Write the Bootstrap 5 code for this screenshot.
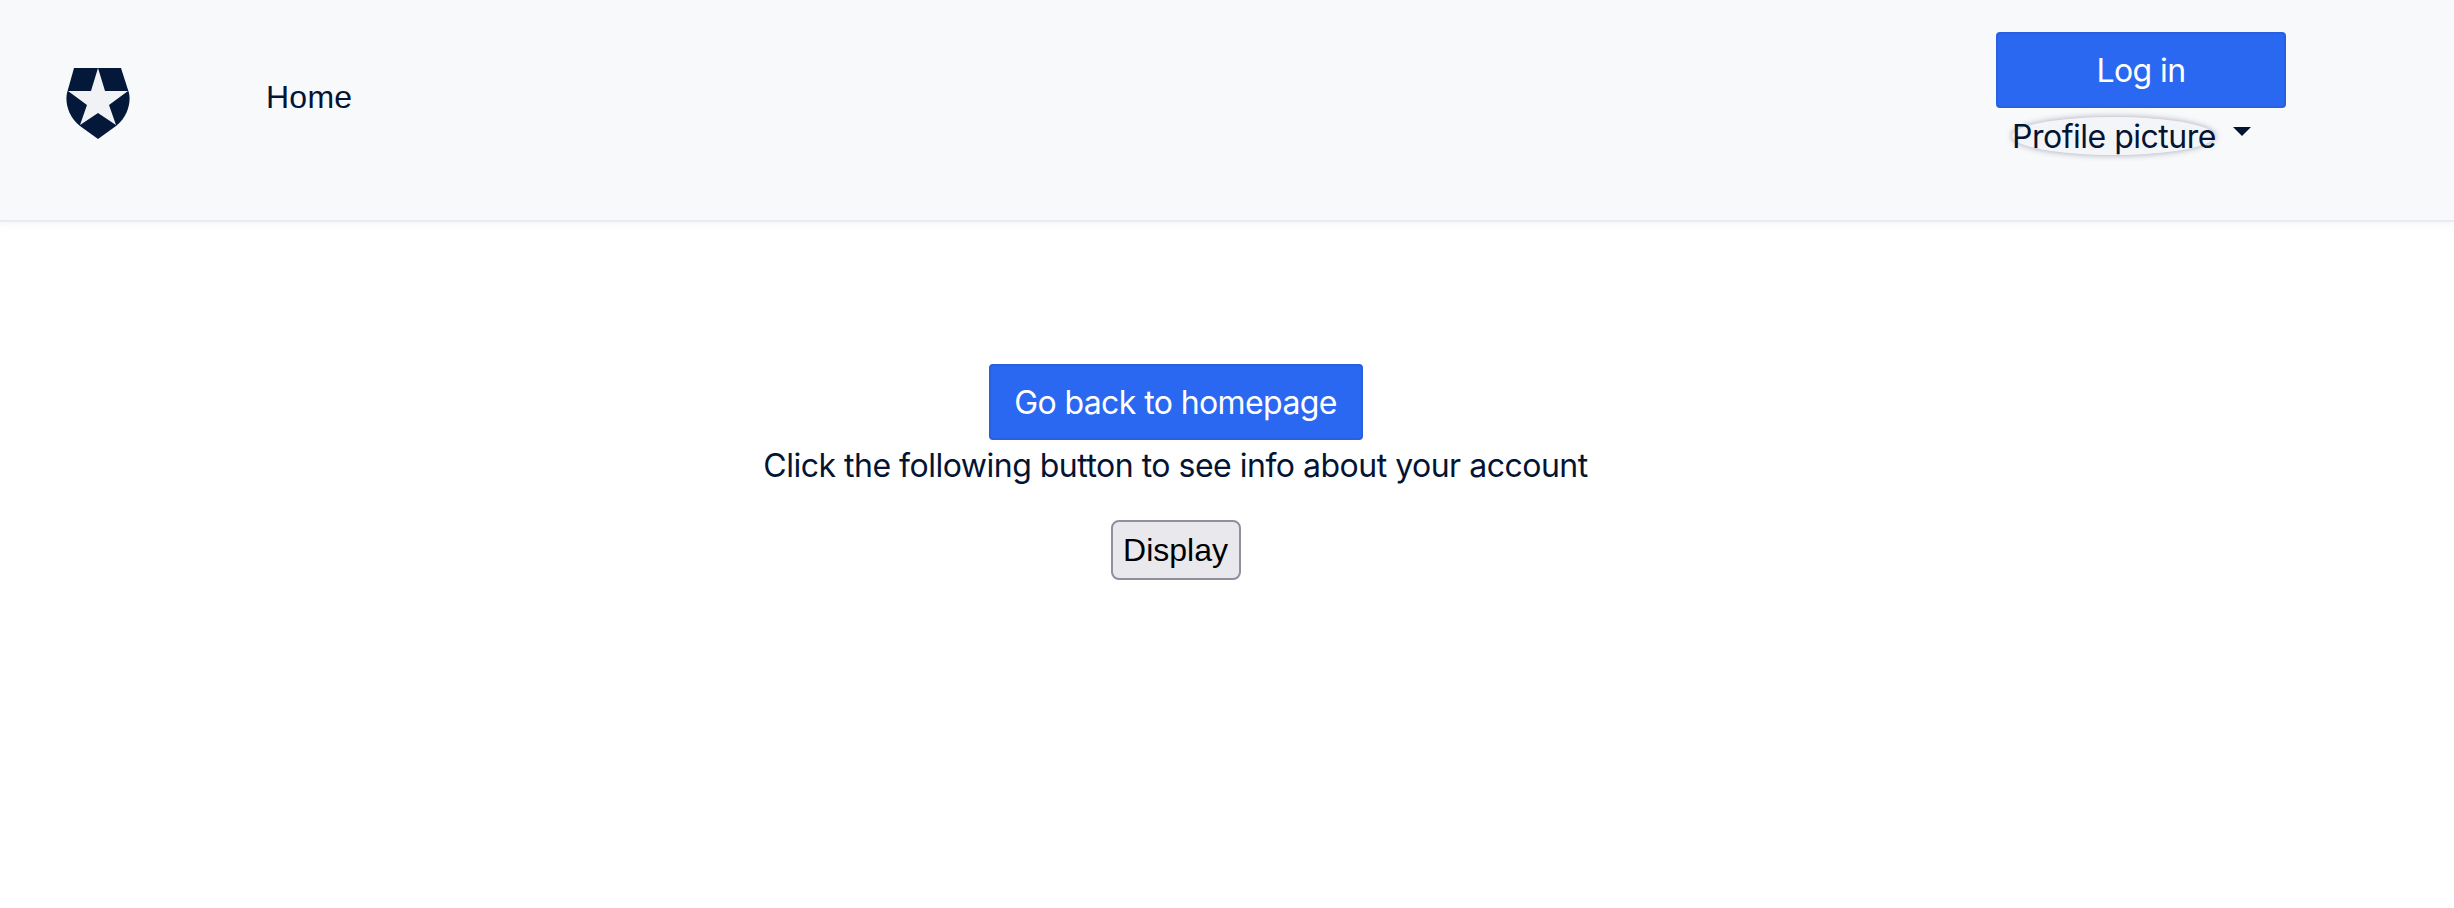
<!DOCTYPE html>
<html lang="en">
<head>
  <meta charset="UTF-8" />
  <meta name="viewport" content="width=device-width, initial-scale=1" />
  <title>Account</title>
  <link href="https://cdn.jsdelivr.net/npm/bootstrap@5.3.0/dist/css/bootstrap.min.css" rel="stylesheet" />
  <style>
    body { font-family: Inter, "Liberation Sans", sans-serif; font-size: 32px; line-height: 48px; letter-spacing: -.5px; color: #041433; background: #fff; }
    .top-bar { height: 222px; padding: 0; background: #f8f9fb; border-bottom: 2px solid #eaebf2; box-shadow: 0 2px 6px rgba(234,235,242,.5); align-items: flex-start; justify-content: flex-start; flex-wrap: nowrap; }
    .shield-logo { display: block; width: 64px; height: 71px; margin: 68px 0 0 66px; }
    .home-link { margin: 73px 0 0 136px; font-family: "Liberation Sans", sans-serif; font-size: 32px; line-height: 48px; letter-spacing: .25px; color: #041433; text-decoration: none; }
    .account-box { margin: 32px 168px 0 auto; width: 290px; }
    .btn-auth { display: block; width: 290px; height: 76px; padding: 0; font-size: 32px; line-height: 74px; letter-spacing: -.6px; border: 2px solid #2860e0; border-radius: 4px; background: #2b68f1; color: #fff; }
    .btn-auth:hover { background: #2b68f1; color: #fff; border-color: #2860e0; }
    .profile-toggle { display: flex; align-items: flex-start; margin-left: 16px; color: #041433; text-decoration: none; }
    .profile-pic { display: block; width: 203px; height: 38px; margin-top: 9px; line-height: 40px; font-size: 32px; white-space: nowrap; background: #f4f5f8; box-shadow: 0 0 6px rgba(60,65,90,.45); }
    .caret-mark { width: 0; height: 0; margin: 19px 0 0 18px; border-top: 9px solid #041433; border-left: 9px solid transparent; border-right: 9px solid transparent; }
    .page-body { padding: 142px 103px 0 0; text-align: center; }
    .btn-back { display: inline-block; width: 374px; height: 76px; vertical-align: top; }
    .account-text { margin: 0 0 30px; padding-top: 2px; line-height: 48px; white-space: nowrap; }
    .btn-display { display: inline-block; width: 130px; height: 60px; padding: 0; font-family: "Liberation Sans", sans-serif; font-size: 32px; line-height: 56px; letter-spacing: 0; color: #000; background: #e9e9ed; border: 2px solid #8f8f9d; border-radius: 8px; }
  </style>
</head>
<body>

<nav class="navbar navbar-expand top-bar">
  <a href="#" aria-label="Auth0">
    <svg class="shield-logo" viewBox="0 0 64 71">
      <path fill="#04183a" d="M8 0H55L63 25C65 34 62 49 50 58L32 71L14 58C2 49-1 34 1 25Z"/>
      <path fill="#f1f2f6" d="M32 0L39 23H62L43 37L50 57L32 45L14 57L21 37L2 23H25Z"/>
    </svg>
  </a>
  <a class="home-link" href="#">Home</a>
  <div class="account-box">
    <button class="btn btn-auth" type="button">Log in</button>
    <a class="profile-toggle" href="#">
      <span class="profile-pic rounded-circle">Profile picture</span>
      <span class="caret-mark"></span>
    </a>
  </div>
</nav>

<main class="page-body">
  <a class="btn btn-auth btn-back" href="#">Go back to homepage</a>
  <p class="account-text">Click the following button to see info about your account</p>
  <button class="btn-display" type="button">Display</button>
</main>

<script src="https://cdn.jsdelivr.net/npm/bootstrap@5.3.0/dist/js/bootstrap.bundle.min.js"></script>
</body>
</html>
